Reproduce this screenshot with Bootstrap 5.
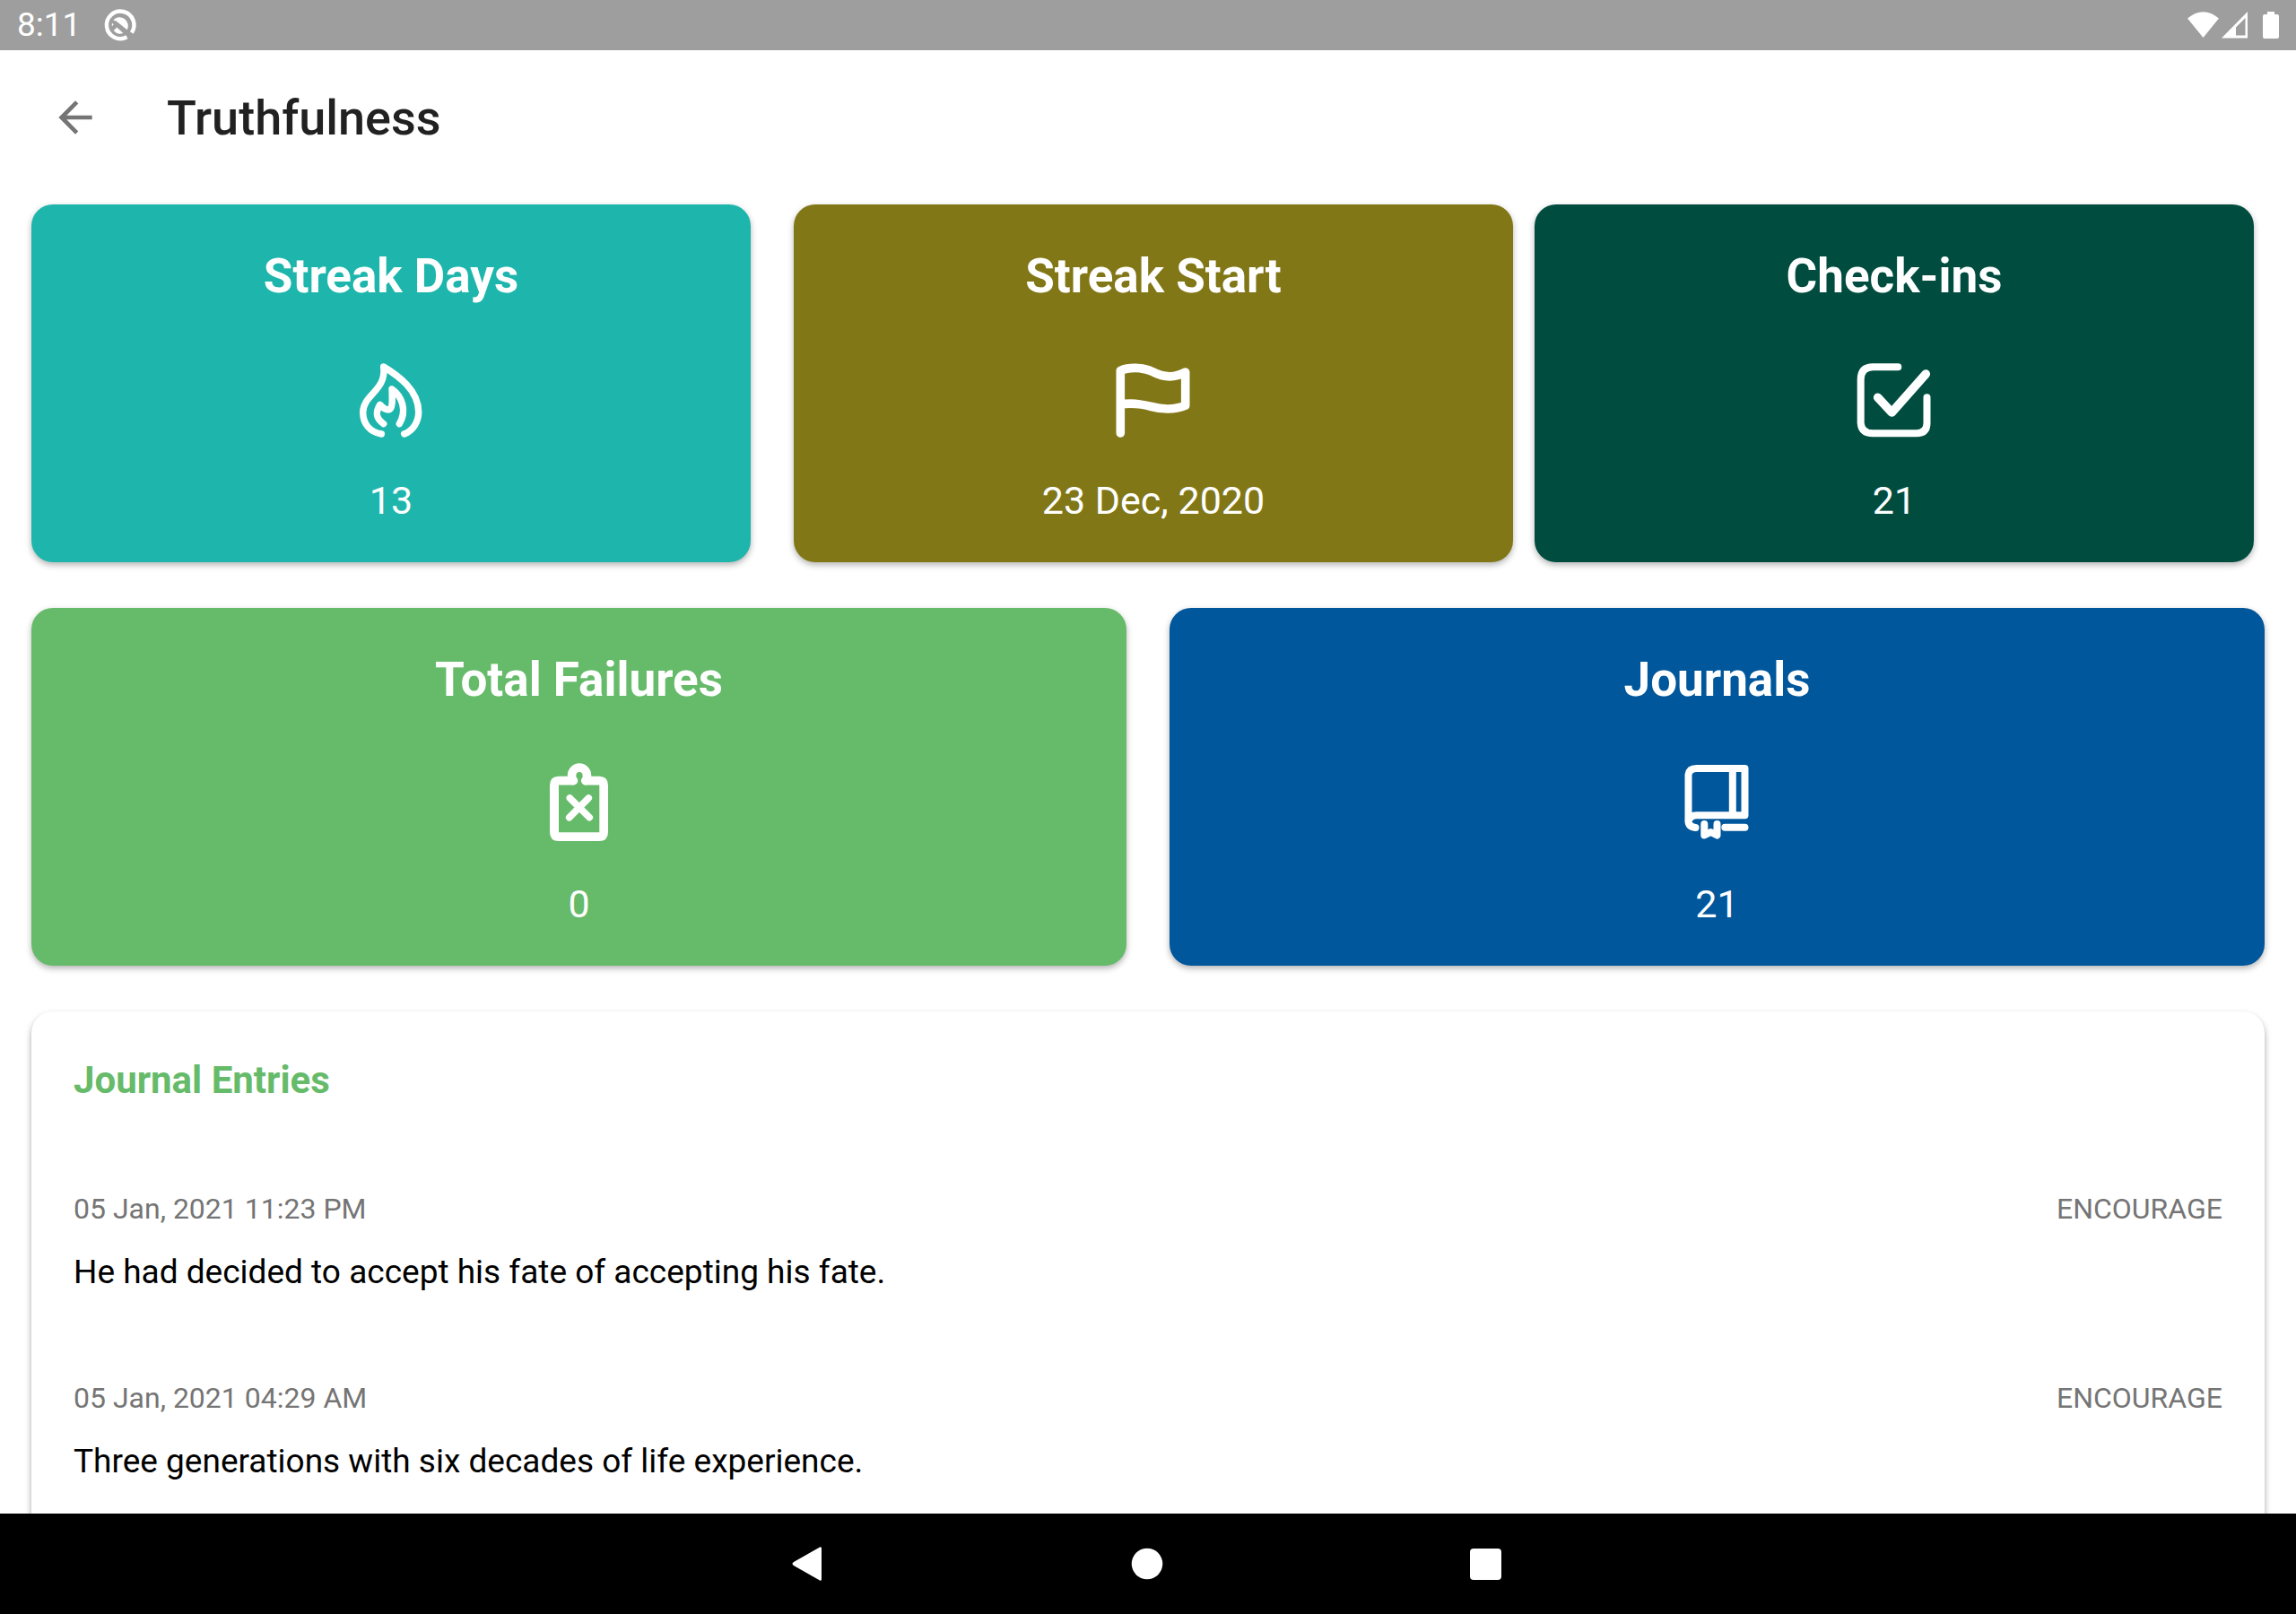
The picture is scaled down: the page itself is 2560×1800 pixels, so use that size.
<!DOCTYPE html>
<html lang="en">
<head>
<meta charset="utf-8">
<meta name="viewport" content="width=device-width, initial-scale=1">
<title>Truthfulness</title>
<link href="https://cdn.jsdelivr.net/npm/bootstrap@5.3.0/dist/css/bootstrap.min.css" rel="stylesheet">
<style>
  body { font-family: Roboto, sans-serif; color: #000; background: #fff; }
  svg { display: block; overflow: visible; }
  .status-strip { height: 56px; padding: 0 19px; background: #9e9e9e; color: #fff; font-size: 37px; line-height: 58px; }
  .status-strip .notice { margin-left: 26px; }
  .status-strip .signals { gap: 3px; }
  .status-strip .battery { margin-left: 14px; }
  .app-bar { height: 150px; padding: 0 56px; gap: 74px; }
  .app-title { font-size: 54px; line-height: 62px; font-weight: 500; color: #212121; padding-top: 2px; }
  .content { padding: 22px 35px 0; gap: 51px; }
  .tile-row { gap: 48px; }
  .tile-row.three { gap: 24px; padding-right: 12px; }
  .tile { border: 0; border-radius: 24px; color: #fff; padding: 49px 24px 44px; box-shadow: 0 3px 7px rgba(0,0,0,.3); align-items: center; flex: 1 1 0; }
  .tile h2 { font-size: 53px; line-height: 62px; font-weight: 700; margin: 0 0 65px; }
  .tile svg { margin-bottom: 46px; }
  .tile p { font-size: 43px; line-height: 49px; margin: 0; }
  .teal { background: #1eb6ac; }
  .olive { background: #827717; }
  .forest { background: #004d40; }
  .leaf { background: #66bb6a; }
  .ocean { background: #01579b; }
  .journal { border: 0; border-radius: 24px; padding: 52px 47px 100px; box-shadow: 0 4px 7px rgba(0,0,0,.35); }
  .journal h2 { font-size: 42px; line-height: 50px; font-weight: 700; color: #66bb6a; margin: 0; }
  .entry { margin-top: 99px; }
  .entry .meta { font-size: 32px; line-height: 38px; color: #757575; }
  .entry p { font-size: 37px; line-height: 45px; margin: 29px 0 0; }
  .system-nav { height: 112px; background: #000; gap: 322px; }
  .plain { background: none; border: 0; padding: 0; }
</style>
</head>
<body class="vh-100 d-flex flex-column overflow-hidden">
<div class="status-strip d-flex align-items-center justify-content-between flex-shrink-0">
  <div class="d-flex align-items-center">
    <span>8:11</span>
    <svg class="notice" width="36" height="36" viewBox="0 0 36 36" fill="none" stroke="#fff" aria-hidden="true">
      <path d="M25.5 31.3A15.3 15.3 0 1 1 30.8 26.5" stroke-width="4.4"/>
      <path d="M25.8 23.3A9.6 9.6 0 0 0 10.2 12.4L13.6 13.6ZM8.9 15.2L8.7 19.6L10.6 17.6ZM14.3 20.4L10.7 24A9.6 9.6 0 0 0 21.3 27Z" fill="#fff" stroke="none"/>
    </svg>
  </div>
  <div class="signals d-flex align-items-center">
    <svg width="35" height="30" viewBox="0 0 35 30" fill="#fff" aria-hidden="true"><path d="M0 7.5Q17.500-7 35 7.500L17.500 29Z"/></svg>
    <svg width="29" height="30" viewBox="0 0 29 30" fill="#fff" fill-rule="evenodd" aria-hidden="true"><path d="M29 0V29.500H0ZM26.500 7L16 17.500V26.500H26.500Z"/></svg>
    <svg class="battery" width="18" height="30" viewBox="0 0 18 30" fill="#fff" aria-hidden="true"><path d="M5 0H13V3H16Q18 3 18 5V28Q18 30 16 30H2Q0 30 0 28V5Q0 3 2 3H5Z"/></svg>
  </div>
</div>

<header class="app-bar d-flex align-items-center flex-shrink-0">
  <button class="plain" type="button" aria-label="Back">
    <svg width="56" height="56" viewBox="0 0 24 24" fill="#757575"><path d="M20 11H7.830l5.590-5.590L12 4l-8 8 8 8 1.410-1.410L7.830 13H20v-2z"/></svg>
  </button>
  <h1 class="app-title m-0">Truthfulness</h1>
</header>

<main class="content d-flex flex-column flex-grow-1 overflow-hidden">
  <div class="tile-row three d-flex flex-shrink-0">
    <section class="card tile teal me-4">
      <h2>Streak Days</h2>
      <svg width="84" height="84" viewBox="0 0 84 84" fill="none" stroke="#fff" stroke-width="7.4" stroke-linecap="round" stroke-linejoin="round" aria-hidden="true">
        <path d="M31.300 80C18 78 10.700 68 10.700 56C10.700 36 37 32 33.700 5C50 15 72.700 31 72.700 55.500C72.700 66 67 76 56.700 80"/>
        <path d="M33.700 68.700C25.500 63 24 56.500 29.700 47.300C33 51 35 53 39 53C44 53 43.500 42 43 30C54.500 38 60 54 51.300 68.700"/>
      </svg>
      <p>13</p>
    </section>
    <section class="card tile olive">
      <h2>Streak Start</h2>
      <svg width="84" height="84" viewBox="0 0 84 84" fill="none" stroke="#fff" stroke-width="9.6" stroke-linecap="round" stroke-linejoin="round" aria-hidden="true">
        <path d="M5.300 79V9.300C13 6 29 4.500 41 10.500C53 17 66 17.500 77.700 11V48.300C66 53 53 53 40 49.500C27 46 18 45 5.300 47"/>
      </svg>
      <p>23 Dec, 2020</p>
    </section>
    <section class="card tile forest">
      <h2>Check-ins</h2>
      <svg width="84" height="84" viewBox="0 0 84 84" fill="none" stroke="#fff" stroke-width="8" stroke-linecap="round" stroke-linejoin="round" aria-hidden="true">
        <path d="M46.300 5.300H18.300Q4.700 5.300 4.700 19.300V67.700Q5.500 79.300 18.300 79.300H66.700Q78.500 79.300 78.500 67.700V39.300"/>
        <path d="M23.700 39.300L39.300 56L77.300 13" stroke-width="9.600"/>
      </svg>
      <p>21</p>
    </section>
  </div>

  <div class="tile-row d-flex flex-shrink-0">
    <section class="card tile leaf">
      <h2>Total Failures</h2>
      <svg width="84" height="84" viewBox="0 0 84 84" fill="none" stroke="#fff" stroke-linecap="round" aria-hidden="true">
        <path d="M35.500 11.700H19Q9 11.700 9 21.700V74Q9 84 19 84H64Q74 84 74 74V21.700Q74 11.700 64 11.700H48.500V21.500H64.300V74.300H19V21.500H35.500Z" fill="#fff" stroke="none"/>
        <path d="M35.500 16.600C33.500 16 33.500 13 33.600 10.500A8.400 8.400 0 0 1 50.400 10.500C50.500 13 50.500 16 48.700 16.600" stroke-width="9.600"/>
        <path d="M31.300 36L53.300 57.700M52.300 36L30.700 57.700" stroke-width="7.600"/>
      </svg>
      <p>0</p>
    </section>
    <section class="card tile ocean">
      <h2>Journals</h2>
      <svg width="84" height="84" viewBox="0 0 84 84" fill="none" stroke="#fff" stroke-width="8" stroke-linecap="round" stroke-linejoin="round" aria-hidden="true">
        <path d="M17.500 69Q9.500 68 9.500 61.500V10Q10.500 3 18.500 3H72.500V55.300H18.500Q12 55.300 9.500 61.500M58.800 3V55.300M50.300 68.700H72.500"/>
        <path d="M27.300 65V77.500L34.400 74L41.500 77.500V65"/>
      </svg>
      <p>21</p>
    </section>
  </div>

  <section class="card journal flex-shrink-0">
    <h2>Journal Entries</h2>
    <article class="entry">
      <div class="meta d-flex justify-content-between"><time datetime="2021-01-05T23:23">05 Jan, 2021 11:23 PM</time><span>ENCOURAGE</span></div>
      <p>He had decided to accept his fate of accepting his fate.</p>
    </article>
    <article class="entry">
      <div class="meta d-flex justify-content-between"><time datetime="2021-01-05T04:29">05 Jan, 2021 04:29 AM</time><span>ENCOURAGE</span></div>
      <p>Three generations with six decades of life experience.</p>
    </article>
  </section>
</main>

<nav class="system-nav d-flex align-items-center justify-content-center flex-shrink-0" aria-label="System">
  <button class="plain" type="button" aria-label="Back"><svg width="56" height="56" viewBox="0 0 56 56" fill="#fff"><path d="M40 9.500Q42 8.500 42 11V45Q42 47.500 40 46.500L11 30Q8 28 11 26Z"/></svg></button>
  <button class="plain" type="button" aria-label="Home"><svg width="56" height="56" viewBox="0 0 56 56" fill="#fff"><circle cx="27" cy="28" r="17.300"/></svg></button>
  <button class="plain" type="button" aria-label="Recent apps"><svg width="56" height="56" viewBox="0 0 56 56" fill="#fff"><rect x="9" y="11" width="35" height="35" rx="4"/></svg></button>
</nav>
<script src="https://cdn.jsdelivr.net/npm/bootstrap@5.3.0/dist/js/bootstrap.bundle.min.js"></script>
</body>
</html>
